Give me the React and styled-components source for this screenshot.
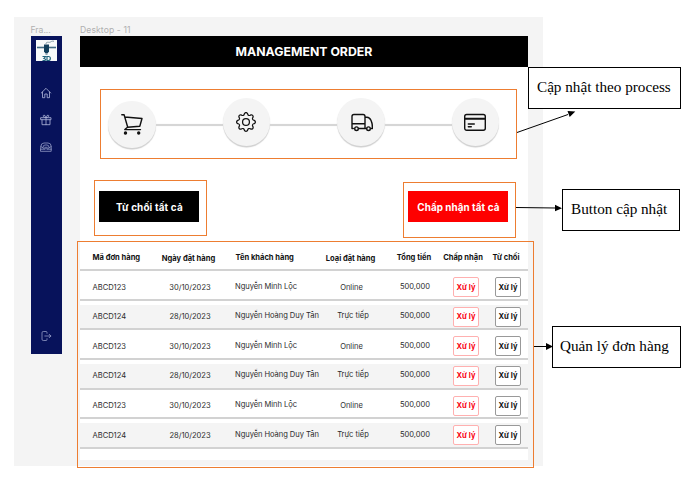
import React from "react";
import styled, { createGlobalStyle } from "styled-components";
import { BsGear } from "react-icons/bs";

const GlobalStyle = createGlobalStyle`
  * { box-sizing: border-box; }
  body { margin: 0; background: #fff; overflow: hidden; }
`;

const Page = styled.div`
  position: relative;
  width: 682px;
  height: 488px;
  padding: 17px 0 0 14px;
  background: #fff;
  font-family: Inter, "Noto Sans", sans-serif;
`;

const Canvas = styled.div`
  display: flex;
  align-items: flex-start;
  width: 529px;
  height: 449px;
  padding-top: 6px;
  padding-left: 16.5px;
  background: #f4f4f4;
`;

const Frame = styled.div`
  width: ${(p) => p.$width}px;
  margin-right: ${(p) => p.$gap || 0}px;
`;

const FrameLabel = styled.div`
  height: 13px;
  font-size: 8.6px;
  line-height: 14px;
  letter-spacing: ${(p) => p.$spacing || 0}px;
  color: #b0b0b0;
  white-space: nowrap;
`;

const Sidebar = styled.nav`
  display: flex;
  flex-direction: column;
  align-items: center;
  height: 318px;
  padding: 4px 0 12px;
  background: #07125b;
  color: #a9b0d6;
`;

const Logo = styled.div`
  width: 21px;
  height: 21px;
  background: #f7f9fa;
  svg { display: block; }
`;

const Menu = styled.div`
  display: flex;
  flex-direction: column;
  gap: 15px;
  margin-top: 26px;
`;

const SideIcon = styled.svg`
  display: block;
  width: 12px;
  height: 12px;
  margin-top: ${(p) => (p.$bottom ? "auto" : 0)};
  fill: none;
  stroke: currentColor;
  stroke-width: ${(p) => (p.$fine ? 0.7 : 0.85)};
  stroke-linecap: round;
  stroke-linejoin: round;
`;

const Screen = styled.main`
  height: 424px;
  background: #fff;
`;

const TitleBar = styled.h1`
  display: flex;
  align-items: center;
  justify-content: center;
  height: 31px;
  margin: 0;
  background: #000;
  color: #fff;
  font-size: 12.3px;
  font-weight: 700;
  letter-spacing: 0;
`;

const Process = styled.section`
  display: flex;
  align-items: flex-start;
  width: 417px;
  height: 70px;
  margin: 22px 0 0 20px;
  padding: 8px 0 0 7px;
  border: 1px solid #ed7d31;
`;

const Step = styled.div`
  display: flex;
  align-items: center;
  justify-content: center;
  flex: none;
  width: 47.5px;
  height: 47.5px;
  margin-top: ${(p) => p.$drop || 0}px;
  border-radius: 50%;
  background: #f4f4f4;
  box-shadow: 0 1.5px 1px #cfcfcf;
  color: #111;
`;

const Connector = styled.div`
  flex: 1;
  max-width: 67px;
  height: 2px;
  margin-top: 25.5px;
  background: #d6d6d6;
  box-shadow: 0 0 1px #ddd;
`;

const StepIcon = styled.svg`
  width: 24px;
  height: 24px;
  fill: none;
  stroke: currentColor;
  stroke-width: 1.4;
  stroke-linecap: round;
  stroke-linejoin: round;
`;

const Actions = styled.section`
  display: flex;
  justify-content: space-between;
  height: 82px;
  padding: 21px 12px 0 14px;
`;

const ActionFrame = styled.div`
  width: 113px;
  height: 56px;
  margin-top: ${(p) => p.$drop || 0}px;
  padding: ${(p) => 10.4 - (p.$drop || 0)}px 0 0 4.4px;
  border: 1px solid #ed7d31;
`;

const ActionButton = styled.button`
  display: block;
  width: 100px;
  height: 31px;
  padding: 0;
  border: 0;
  background: ${(p) => p.$color};
  color: #fff;
  font: 700 9.9px Inter, sans-serif;
  letter-spacing: ${(p) => p.$spacing || 0}px;
  white-space: nowrap;
`;

const Orders = styled.section`
  position: relative;
`;

const OrdersFrame = styled.div`
  position: absolute;
  left: -3px;
  top: 0;
  width: 457px;
  height: 227px;
  border: 1px solid #ed7d31;
`;

const Row = styled.div`
  display: grid;
  grid-template-columns: 68px 81px 86px 58px 69px 42px 44px;
  align-items: start;
  height: ${(p) => (p.$head ? 30.2 : 25.6)}px;
  margin-bottom: 4px;
  padding-top: ${(p) => (p.$head ? 12 : 6.4)}px;
  background: ${(p) => (p.$shade ? "#f4f4f4" : "#fff")};
  border-bottom: 2px solid #d2d2d2;
  font-size: 7.55px;
  font-weight: ${(p) => (p.$head ? 700 : 400)};
  line-height: 10px;
  color: ${(p) => (p.$head ? "#111" : "#2c2c2c")};
`;

const Cell = styled.div`
  display: flex;
  justify-content: ${(p) => (p.$left ? "flex-start" : "center")};
  padding: ${(p) => p.$dy || 0}px 0 0 ${(p) => p.$pad || 0}px;
  letter-spacing: ${(p) => p.$spacing || 0}px;
  white-space: nowrap;
`;

const Handle = styled.button`
  width: 26px;
  height: 20px;
  margin-top: -4.4px;
  padding: 0;
  border: 1px solid ${(p) => (p.$accept ? "#ffb0b0" : "#999")};
  border-radius: 2px;
  background: #fff;
  color: ${(p) => (p.$accept ? "#fb0010" : "#111")};
  font: 700 7.5px Inter, sans-serif;
  white-space: nowrap;
`;

const Note = styled.aside`
  position: absolute;
  left: ${(p) => p.$x}px;
  top: ${(p) => p.$y}px;
  display: flex;
  align-items: center;
  width: ${(p) => p.$width}px;
  height: 42px;
  padding: 0 0 2px ${(p) => p.$pad}px;
  border: 1px solid #000;
  background: #fff;
  color: #000;
  font: 15.2px "Liberation Serif", serif;
  white-space: nowrap;
`;

const Arrows = styled.svg`
  position: absolute;
  left: 0;
  top: 0;
  pointer-events: none;
`;

const minh = { code: "ABCD123", date: "30/10/2023", name: "Nguyễn Minh Lộc", type: "Online" };
const tan = { code: "ABCD124", date: "28/10/2023", name: "Nguyễn Hoàng Duy Tân", type: "Trực tiếp", shade: true };
const orders = [minh, tan, minh, tan, minh, tan];

function PrinterLogo() {
  return (
    <svg width="21" height="21" viewBox="0 0 21 21">
      <path d="M1 7.5h19" stroke="#426a83" strokeWidth="1.6" />
      <path d="M10 4c0-3 3-1 4.500-2s2-1 3.500-.7" fill="none" stroke="#78909c" strokeWidth=".9" />
      <path d="M8 4.500h5v7l-1.500 2h-2L8 11.500z" fill="#123f5c" />
      <path d="M9.500 14.500h2" stroke="#708d9c" strokeWidth=".8" />
      <path d="M6.500 16.500h3l-1.500 2c2 0 2 2 .5 2H6.500M11 16.500h1.500c2.500 0 2.500 4 0 4H11z" fill="none" stroke="#23657d" strokeWidth="1.200" />
    </svg>
  );
}

function OrderTable() {
  return (
    <Orders>
      <Row $head>
        <Cell $left $pad={12.5}>Mã đơn hàng</Cell>
        <Cell $dy={1}>Ngày đặt hàng</Cell>
        <Cell $left $pad={6.5}>Tên khách hàng</Cell>
        <Cell $dy={1} $pad={13}>Loại đặt hàng</Cell>
        <Cell $pad={13}>Tổng tiền</Cell>
        <Cell>Chấp nhận</Cell>
        <Cell>Từ chối</Cell>
      </Row>
      {orders.map((o, i) => (
        <Row key={i} $shade={o.shade}>
          <Cell $left $pad={12.5} $dy={1}>{o.code}</Cell>
          <Cell $dy={1} $pad={3}>{o.date}</Cell>
          <Cell $left $pad={6} $spacing={-0.05}>{o.name}</Cell>
          <Cell $dy={o.shade ? 0 : 1} $pad={o.shade ? 18 : 15}>{o.type}</Cell>
          <Cell $pad={15}>500,000</Cell>
          <Cell $pad={6}><Handle $accept>Xử lý</Handle></Cell>
          <Cell $pad={4}><Handle>Xử lý</Handle></Cell>
        </Row>
      ))}
      <OrdersFrame />
    </Orders>
  );
}

export default function App() {
  return (
    <Page>
      <GlobalStyle />
      <Canvas>
        <Frame $width={31} $gap={18.5}>
          <FrameLabel>Fra...</FrameLabel>
          <Sidebar>
            <Logo><PrinterLogo /></Logo>
            <Menu>
              <SideIcon viewBox="0 0 12 12">
                <path d="M1.300 6 6 1.300 10.700 6M2.500 5v5.700h2.300V7h2.400v3.700h2.300V5" />
              </SideIcon>
              <SideIcon viewBox="0 0 12 12">
                <path d="M1 3.700h10v2H1zM2 5.700v5h8v-5M6 3.700v7M6 3.600C3 3.600 2.500 1.300 4 1.200S6 3.600 6 3.600 6.500 1.100 8 1.200 9 3.600 6 3.600" />
              </SideIcon>
              <SideIcon $fine viewBox="0 0 12 12">
                <path d="M.8 5.500Q.8 2 4 2h4q3.200 0 3.200 3.500v4.800H.8zM.8 5.500 4.500 7.800h3L11.200 5.500M3 6.200Q3 4 5 4h2q2 0 2 2.200M.8 8.200h3.700M7.500 8.200h3.700M4.700 6.300h2.600" />
              </SideIcon>
            </Menu>
            <SideIcon $bottom $fine viewBox="0 0 12 12">
              <path d="M7 3.300V2.500Q7 1.500 6 1.500H3.300Q2 1.500 2 2.800v6.400q0 1.300 1.300 1.300H6q1 0 1-1v-.8M4.800 6h6M9.200 4.300 10.900 6 9.200 7.700" />
            </SideIcon>
          </Sidebar>
        </Frame>
        <Frame $width={448}>
          <FrameLabel $spacing={0.1}>Desktop - 11</FrameLabel>
          <Screen>
            <TitleBar>MANAGEMENT ORDER</TitleBar>
            <Process>
              <Step $drop={2.5}>
                <StepIcon viewBox="0 0 24 24">
                  <path d="M1.800 2.800h2.300L7.500 14.500M4.900 5 22 6.500 19.800 14.300 7.500 15.200 4.800 17.600H20.500" />
                  <circle cx="5.500" cy="21" r="1" fill="currentColor" />
                  <circle cx="18.700" cy="21" r="1" fill="currentColor" />
                </StepIcon>
              </Step>
              <Connector />
              <Step><BsGear size={20} /></Step>
              <Connector />
              <Step>
                <StepIcon viewBox="0 0 24 24">
                  <path d="M4.300 18.500H3V6.500Q3 4.500 5 4.500h9Q16 4.500 16 6.500v12H9.700M3 13.800h13M16 7.200h2c3.500 0 5.500 5 5.500 11.300h-1.200M16 18.500h1.500" />
                  <circle cx="7.500" cy="18.700" r="1.800" />
                  <circle cx="19.500" cy="18.700" r="1.800" />
                </StepIcon>
              </Step>
              <Connector />
              <Step>
                <StepIcon viewBox="0 0 24 24">
                  <rect x="1.700" y="4.500" width="20.600" height="15.800" rx="2" />
                  <path d="M2 8.800h20" strokeWidth="2" />
                  <path d="M5.300 14h6M5.300 16.700h3" />
                </StepIcon>
              </Step>
            </Process>
            <Actions>
              <ActionFrame>
                <ActionButton $color="#000" $spacing={0.15}>Từ chối tất cả</ActionButton>
              </ActionFrame>
              <ActionFrame $drop={2}>
                <ActionButton $color="#fe0000" $spacing={0.05}>Chấp nhận tất cả</ActionButton>
              </ActionFrame>
            </Actions>
            <OrderTable />
          </Screen>
        </Frame>
      </Canvas>
      <Arrows width="682" height="488">
        <g stroke="#000" strokeWidth="1">
          <path d="M517 132.500 568 114.500M516 207.500 556 208M534 346.500H548" />
        </g>
        <path d="m567.500 111 7.800.5-5.600 5.600zM555 204.800l7 3.400-7 3zM546 343l7 3.500-7 3.500z" />
      </Arrows>
      <Note $x={528} $y={67} $width={153} $pad={8}>Cập nhật theo process</Note>
      <Note $x={562} $y={189} $width={118} $pad={8}>Button cập nhật</Note>
      <Note $x={552} $y={326} $width={129} $pad={7}>Quản lý đơn hàng</Note>
    </Page>
  );
}
